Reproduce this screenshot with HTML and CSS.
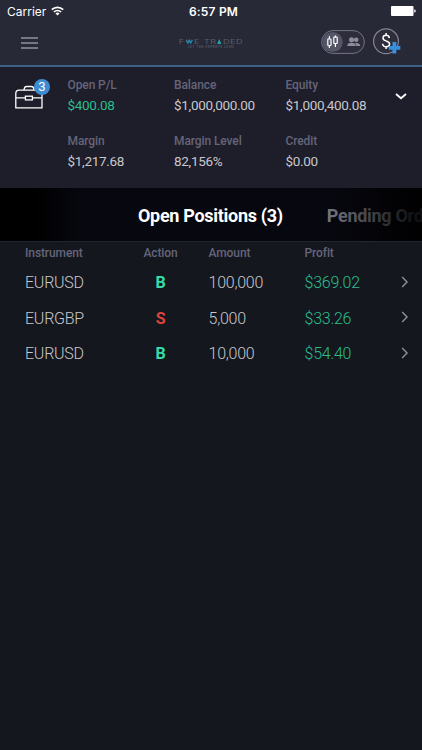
FILE: index.html
```html
<!DOCTYPE html>
<html lang="en">
<head>
    <meta charset="UTF-8">
    <meta name="viewport" content="width=device-width, initial-scale=1.0">
    <title>Open Positions</title>
    <link rel="stylesheet" href="styles.css">
</head>
<body>
    <header class="top">
        <div class="status-bar">
            <div class="carrier">
                <span>Carrier</span>
                <svg width="13" height="10" viewBox="0 0 13 10" fill="none" stroke="#fff" stroke-width="1.7">
                    <path d="M0.8 3.7a8.2 8.2 0 0 1 11.4 0"/>
                    <path d="M2.9 6a5.2 5.2 0 0 1 7.2 0"/>
                    <path d="M6.5 9.6L4.5 7.5a3 3 0 0 1 4 0z" fill="#fff" stroke="none"/>
                </svg>
            </div>
            <div class="time">6:57 PM</div>
            <div class="battery">
                <svg width="25" height="10" viewBox="0 0 25 10" fill="#fff">
                    <rect x="0" y="0" width="22.5" height="10" rx="1"/>
                    <path d="M23.3 3.2q1.5 .5 1.5 1.8t-1.5 1.8z"/>
                </svg>
            </div>
        </div>
        <div class="nav-bar">
            <button class="menu" aria-label="Menu"><i></i><i></i><i></i></button>
            <div class="logo">
                <div class="logo-name">
                    <span>F</span>
                    <svg width="5" height="5" viewBox="0 0 7 5" preserveAspectRatio="none" fill="none" stroke="#2787a8" stroke-width="1.3">
                        <path d="M0.6 0.8L2.2 4L3.5 1.2L4.8 4L6.4 0.8"/>
                    </svg>
                    <span>E</span>
                    <span class="word">TR</span>
                    <svg width="3" height="5" viewBox="0 0 5 5" preserveAspectRatio="none"><path d="M2.5 0L5 5H0z" fill="#1fa3a5"/></svg>
                    <span>DED</span>
                </div>
                <div class="logo-slogan">LET THE EXPERTS LEAD</div>
            </div>
            <div class="actions">
                <svg width="44" height="24" viewBox="0 0 44 24">
                    <rect x="0.6" y="0.6" width="42.8" height="22.8" rx="11.4" fill="#2d2d3b" stroke="#74748a"/>
                    <circle cx="11.6" cy="12" r="10.1" fill="#555568"/>
                    <g fill="none" stroke="#fff" stroke-width="1.2">
                        <path d="M8.4 6.3V9M8.4 15.5V18M14.4 5.5V7.5M14.4 13.5V17"/>
                        <rect x="6.8" y="9" width="3.2" height="6.5" rx="0.5"/>
                        <rect x="12.8" y="7" width="3.4" height="6.5" rx="0.5"/>
                    </g>
                    <g fill="#8d8d9b">
                        <circle cx="35.2" cy="9.8" r="2.3"/>
                        <path d="M34.2 13q5.2-.2 5 3.1h-4q0-2-1.4-3z"/>
                        <circle cx="30.5" cy="9.8" r="2.5"/>
                        <path d="M26.3 16.1q0-3.3 4.2-3.3t4.2 3.3z"/>
                    </g>
                </svg>
                <svg width="28" height="27" viewBox="0 0 28 27">
                    <circle cx="13" cy="13.3" r="12.4" fill="#2d2d3b" stroke="#85859a" stroke-width="1.2"/>
                    <path d="M16.3 10.1q-.2-2.8-3.2-2.8-3.1 0-3.1 2.7 0 2 3.1 2.9 3.5.9 3.5 3.1 0 2.8-3.3 2.8-3.5 0-3.6-3.1M13.1 5v2.3M13.1 18.8v2.2" fill="none" stroke="#fff" stroke-width="1.5"/>
                    <path d="M21.4 14v11.6M15.7 19.8h11.6" stroke="#3690dd" stroke-width="3.8"/>
                </svg>
            </div>
        </div>
    </header>

    <section class="account">
        <div class="briefcase">
            <svg width="28" height="24" viewBox="0 0 28 24" fill="none" stroke="#fff" stroke-width="1.3">
                <path d="M0.8 22.8V8.5q0-3.3 3.3-3.3h19.6q3.3 0 3.3 3.3v14.3z"/>
                <path d="M9 5.2q.2-3.7 2.7-3.7h4.6q2.5 0 2.7 3.7M0.8 12.8h9.4M17.6 12.8H27"/>
                <rect x="10.4" y="11.2" width="7" height="3.7"/>
            </svg>
            <span class="badge">3</span>
        </div>
        <dl class="figures">
            <div><dt>Open P/L</dt><dd class="up">$400.08</dd></div>
            <div><dt>Balance</dt><dd>$1,000,000.00</dd></div>
            <div><dt>Equity</dt><dd>$1,000,400.08</dd></div>
            <div><dt>Margin</dt><dd>$1,217.68</dd></div>
            <div><dt>Margin Level</dt><dd>82,156%</dd></div>
            <div><dt>Credit</dt><dd>$0.00</dd></div>
        </dl>
        <svg class="expand" width="12" height="7" viewBox="0 0 12 7" fill="none" stroke="#fff" stroke-width="1.8">
            <path d="M1 1L6 5.3L11 1"/>
        </svg>
    </section>

    <nav class="tabs">
        <span class="tab active">Open Positions (3)</span>
        <span class="tab">Pending Orders</span>
    </nav>

    <main class="positions">
        <div class="row head">
            <span>Instrument</span><span class="action">Action</span><span>Amount</span><span>Profit</span>
        </div>
        <div class="row">
            <span>EURUSD</span><b class="action buy">B</b><span>100,000</span><span class="up">$369.02</span>
            <svg width="8" height="12" viewBox="0 0 8 12"><path d="M1.2 1L6 6L1.2 11"/></svg>
        </div>
        <div class="row">
            <span>EURGBP</span><b class="action sell">S</b><span>5,000</span><span class="up">$33.26</span>
            <svg width="8" height="12" viewBox="0 0 8 12"><path d="M1.2 1L6 6L1.2 11"/></svg>
        </div>
        <div class="row">
            <span>EURUSD</span><b class="action buy">B</b><span>10,000</span><span class="up">$54.40</span>
            <svg width="8" height="12" viewBox="0 0 8 12"><path d="M1.2 1L6 6L1.2 11"/></svg>
        </div>
    </main>
</body>
</html>
```
FILE: styles.css
```css
* {
    box-sizing: border-box;
}
body {
    margin: 0;
    height: 750px;
    overflow: hidden;
    background-color: #14171e;
    color: #c8c8cc;
    font-family: Roboto, sans-serif;
}
svg {
    display: block;
}
.top {
    height: 67px;
    background-color: #282936;
    border-bottom: 2px solid #3c5f86;
}
.status-bar {
    display: grid;
    grid-template-columns: 1fr auto 1fr;
    align-items: center;
    height: 22px;
    padding: 0 6px 0 7px;
    color: #fff;
    font-family: Inter, sans-serif;
    font-size: 12px;
}
.carrier {
    display: flex;
    align-items: center;
    gap: 5px;
}
.time {
    padding-left: 4px;
    font-weight: 600;
    letter-spacing: 0.2px;
}
.battery {
    justify-self: end;
}
.nav-bar {
    display: grid;
    grid-template-columns: 1fr auto 1fr;
    height: 43px;
    padding: 0 21px;
}
.menu {
    display: flex;
    flex-direction: column;
    gap: 3px;
    width: 17px;
    padding: 0;
    margin-top: 15px;
    border: none;
    background: none;
}
.menu i {
    width: 17px;
    height: 2px;
    background-color: #767688;
}
.logo {
    margin-top: 16px;
    width: 64px;
    color: #5c5c68;
    text-align: center;
    font-family: Inter, sans-serif;
}
.logo-name {
    display: flex;
    align-items: center;
    justify-content: center;
    gap: 0.6px;
    height: 6px;
    font-size: 6px;
    letter-spacing: 0.4px;
    white-space: nowrap;
    transform: scaleX(1.5);
}
.logo-name .word {
    margin-left: 2px;
}
.logo-slogan {
    margin-top: 1px;
    color: #747482;
    font-size: 3px;
    line-height: 4px;
    letter-spacing: 0.55px;
    white-space: nowrap;
}
.actions {
    display: flex;
    justify-content: flex-end;
    align-items: flex-start;
    gap: 8px;
    padding-top: 6px;
}
.actions svg:first-child {
    margin-top: 2px;
}
.account {
    display: flex;
    height: 121px;
    background-color: #1e1d2a;
}
.briefcase {
    position: relative;
    width: 67px;
    padding: 18px 0 0 15px;
}
.badge {
    position: absolute;
    top: 12px;
    left: 34px;
    width: 16px;
    height: 16px;
    border-radius: 50%;
    background-color: #3d8cd2;
    color: #fff;
    font-size: 13px;
    line-height: 16px;
    text-align: center;
}
.figures {
    display: grid;
    grid-template-columns: 106.5px 111.5px 110px;
    grid-auto-rows: 56px;
    margin: 0;
    padding-top: 10px;
}
.figures div {
    padding-left: 0.5px;
}
.figures dt {
    color: #65657a;
    font-size: 12px;
    font-weight: 500;
    line-height: 16px;
    letter-spacing: -0.1px;
}
.figures dd {
    margin: 4px 0 0;
    font-size: 13.5px;
    line-height: 17px;
    letter-spacing: -0.3px;
}
.up,
.figures .up {
    color: #2bbd8c;
}
.expand {
    margin-top: 26px;
}
.tabs {
    position: relative;
    display: flex;
    gap: 44px;
    height: 54px;
    padding-left: 138px;
    overflow: hidden;
    background-color: #070710;
    border-bottom: 1px solid #24242f;
    font-size: 18px;
    font-weight: 700;
    line-height: 55px;
    letter-spacing: -0.3px;
    white-space: nowrap;
}
/* fades the tabs out towards both screen edges */
.tabs::after {
    content: "";
    position: absolute;
    inset: 0;
    background: linear-gradient(to right, #000 8%, transparent 20%, transparent 77%, rgba(0, 0, 0, 0.85) 98%);
}
.tab {
    color: #777780;
}
.tab.active {
    color: #fff;
}
.row {
    display: grid;
    grid-template-columns: 112.5px 71px 96px 96.5px 1fr;
    align-items: center;
    height: 35.5px;
    padding-left: 25px;
    font-size: 16px;
    font-weight: 300;
    letter-spacing: -0.25px;
}
.row.head {
    height: 22px;
    color: #65657a;
    font-size: 12px;
    font-weight: 500;
    letter-spacing: -0.1px;
}
.row .action {
    width: 46px;
    text-align: center;
}
.row b {
    font-weight: 700;
}
.row.head + .row {
    margin-top: 1px;
}
.buy {
    color: #35dba8;
}
.sell {
    color: #dc443d;
}
.row svg {
    margin-top: -2px;
    fill: none;
    stroke: #8c8c92;
    stroke-width: 1.5;
}
```
